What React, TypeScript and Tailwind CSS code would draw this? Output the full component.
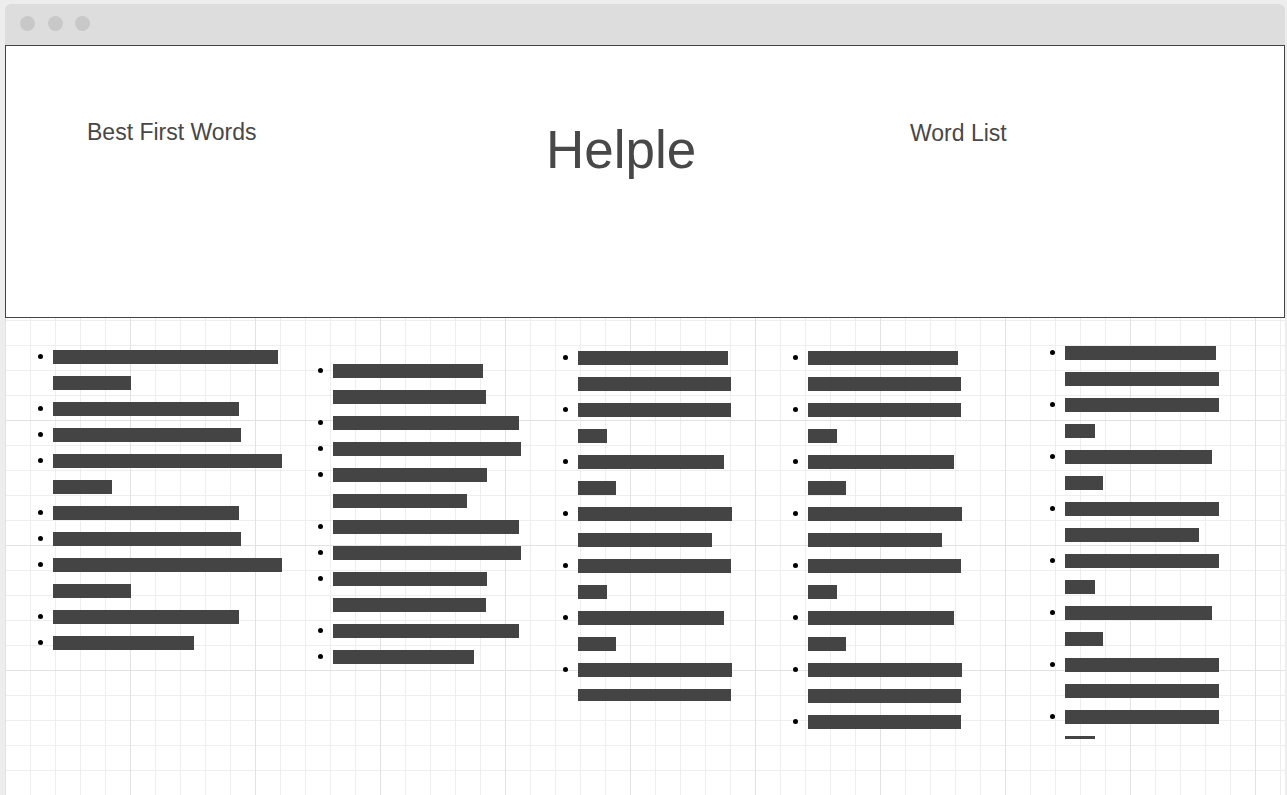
const columns: { width: string; top: string; clip: string; items: number[][] }[] = [
  {
    width: "w-[280px]",
    top: "mt-[26px]",
    clip: "",
    items: [[225, 78], [186], [188], [229, 59], [186], [188], [229, 78], [186], [141]],
  },
  {
    width: "w-[245px]",
    top: "mt-[40px]",
    clip: "",
    items: [[150, 153], [186], [188], [154, 134], [186], [188], [154, 153], [186], [141]],
  },
  {
    width: "w-[230px]",
    top: "mt-[27px]",
    clip: "max-h-[356px] overflow-hidden",
    items: [[150, 153], [153, 29], [146, 38], [154, 134], [153, 29], [146, 38], [154, 153]],
  },
  {
    width: "w-[257px]",
    top: "mt-[27px]",
    clip: "",
    items: [[150, 153], [153, 29], [146, 38], [154, 134], [153, 29], [146, 38], [154, 153], [153]],
  },
  {
    width: "w-[200px]",
    top: "mt-[22px]",
    clip: "max-h-[399px] overflow-hidden",
    items: [[151, 154], [154, 30], [147, 38], [154, 134], [154, 30], [147, 38], [154, 154], [154, 30]],
  },
];

function WordColumn({ width, top, clip, items }: (typeof columns)[number]) {
  return (
    <ul className={`${width} ${top} ${clip} flex flex-col shrink-0`}>
      {items.map((lines, i) => (
        <li key={i} className="flex">
          <span className="w-[15px] shrink-0">
            <span className="block mt-[10px] w-[5px] h-[5px] rounded-full bg-black" />
          </span>
          <span className="flex flex-col">
            {lines.map((w, j) => (
              <span key={j} className="h-[26px] flex items-center">
                <span className="block h-[14px] bg-[#444444]" style={{ width: w }} />
              </span>
            ))}
          </span>
        </li>
      ))}
    </ul>
  );
}

export default function App() {
  return (
    <div className="w-[1287px] h-[795px] overflow-hidden bg-[#ededed] pt-[4px] pl-[5px] font-['Liberation_Sans',Arial,sans-serif]">
      <div className="w-[1280px]">
        <div className="h-[41px] bg-[#dddddd] rounded-t-[6px] flex gap-[12.5px] pl-[15px] pt-[12px]">
          <span className="w-[15px] h-[15px] rounded-full bg-[#c8c8c8]" />
          <span className="w-[15px] h-[15px] rounded-full bg-[#c8c8c8]" />
          <span className="w-[15px] h-[15px] rounded-full bg-[#c8c8c8]" />
        </div>

        <div className="h-[750px] bg-white bg-[linear-gradient(to_right,#e2e2e2_1px,transparent_1px),linear-gradient(to_bottom,#e2e2e2_1px,transparent_1px),linear-gradient(to_right,#eeeeee_1px,transparent_1px),linear-gradient(to_bottom,#eeeeee_1px,transparent_1px)] bg-[size:125px_125px,125px_125px,25px_25px,25px_25px]">
          <header className="h-[273px] bg-white border border-[#444444] flex items-start pt-[75px] pl-[81px] text-[#484848]">
            <div className="w-[459px] text-[23px] leading-none">Best First Words</div>
            <h1 className="w-[364px] mt-[2px] text-[53px] leading-none">Helple</h1>
            <div className="mt-[1px] text-[23px] leading-none">Word List</div>
          </header>

          <div className="flex items-start pl-[33px]">
            {columns.map((col, i) => (
              <WordColumn key={i} {...col} />
            ))}
          </div>
        </div>
      </div>
    </div>
  );
}
